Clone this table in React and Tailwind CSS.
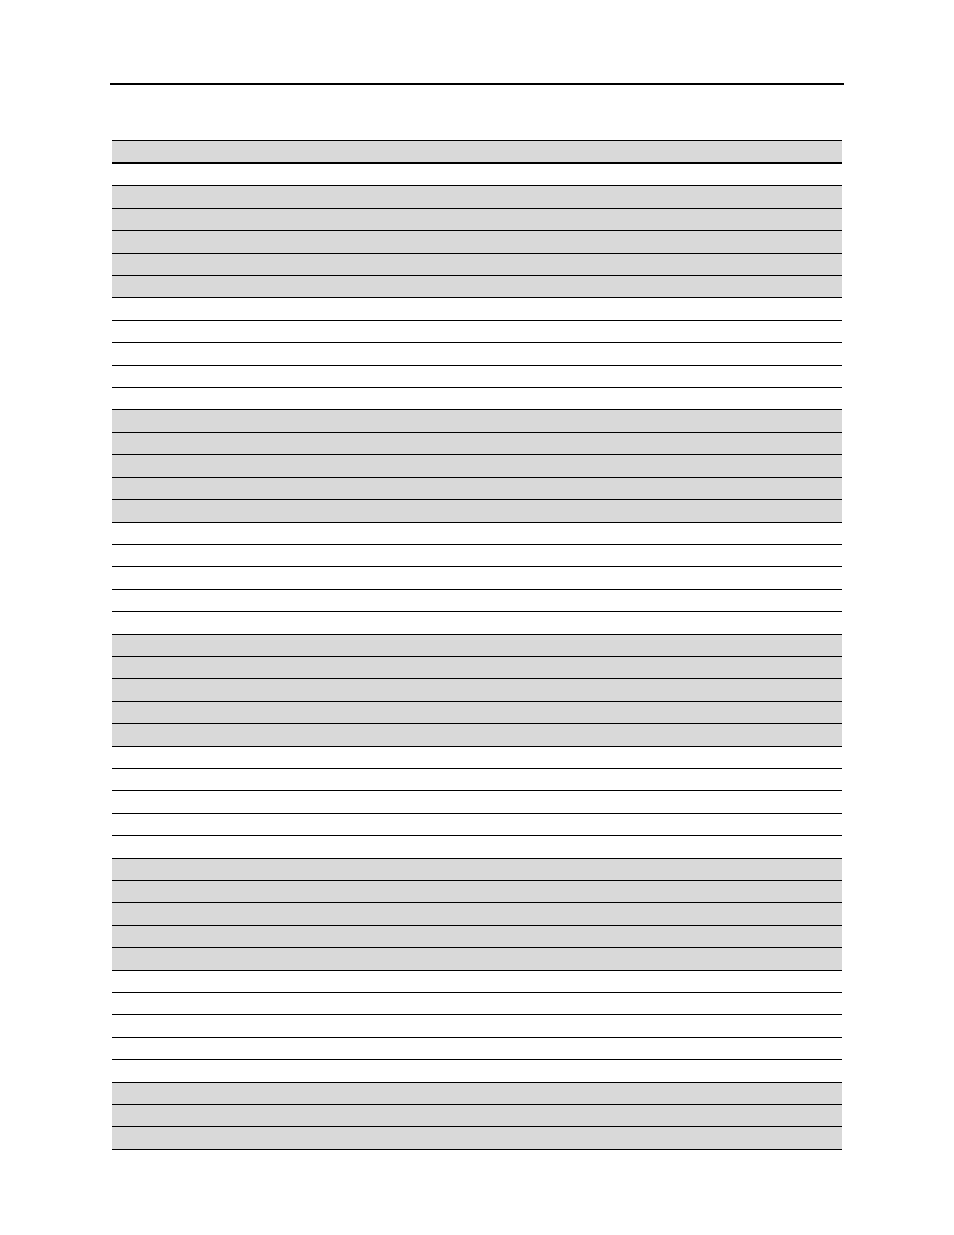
export default function App() {
  const rows = Array.from({ length: 44 }, (_, i) => {
    if (i === 0) return false;
    return Math.floor((i - 1) / 5) % 2 === 0;
  });
  return (
    <div className="w-[954px] h-[1235px] bg-white pt-[83px] pl-[110px]" style={{ fontFamily: '"Liberation Sans", sans-serif' }}>
      <div className="w-[734px] h-[2px] bg-black" />
      <div className="ml-[2px] mt-[55px] w-[730px]">
        <div className="h-[24px] border-t border-b-2 border-black bg-[#d9d9d9]" />
        {rows.map((gray, i) => (
          <div
            key={i}
            className={gray ? "h-[22.41px] border-b border-black bg-[#d9d9d9]" : "h-[22.41px] border-b border-black bg-white"}
          />
        ))}
      </div>
    </div>
  );
}
